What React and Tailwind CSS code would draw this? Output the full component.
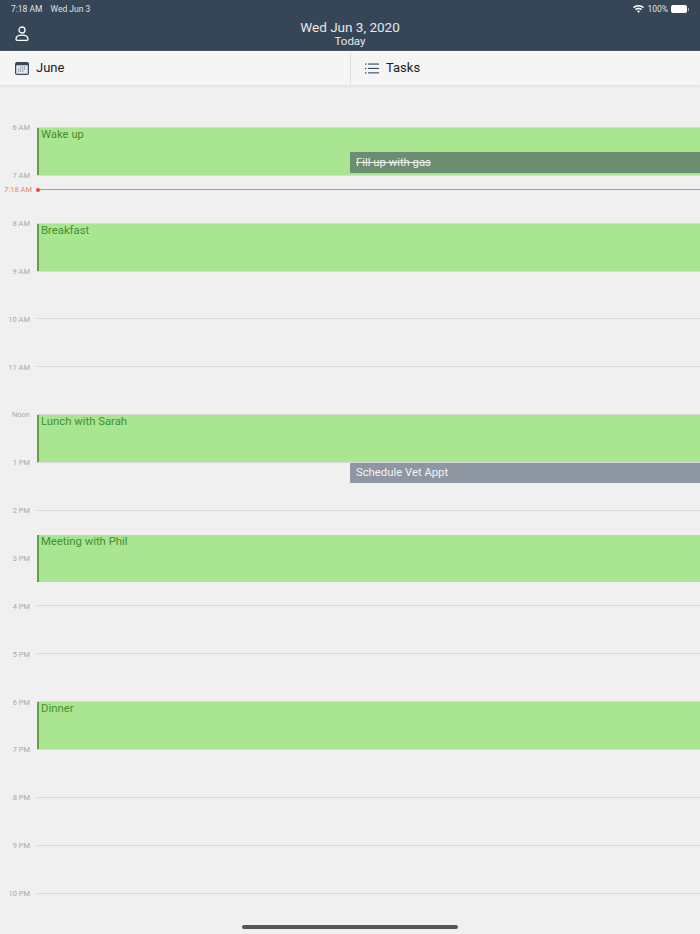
const HOUR = 47.85
const FIRST_LINE = 42

const horas = ['6 AM', '7 AM', '8 AM', '9 AM', '10 AM', '11 AM', 'Noon', '1 PM', '2 PM', '3 PM', '4 PM', '5 PM', '6 PM', '7 PM', '8 PM', '9 PM', '10 PM']

const eventos = [
  { nome: 'Wake up', inicio: 0, fim: 1 },
  { nome: 'Breakfast', inicio: 2, fim: 3 },
  { nome: 'Lunch with Sarah', inicio: 6, fim: 7 },
  { nome: 'Meeting with Phil', inicio: 8.5, fim: 9.5 },
  { nome: 'Dinner', inicio: 12, fim: 13 },
]

function posY(h) {
  return FIRST_LINE + h * HOUR
}

function IconeUsuario() {
  return (
    <svg width="14" height="15" viewBox="0 0 14 15" fill="none" stroke="#ffffff" strokeWidth="1.3">
      <circle cx="7" cy="4" r="3" />
      <path d="M1 13.2c0-2.6 2.2-4 6-4s6 1.400 6 4c0 .7-.4 1.100-1.100 1.100H2.100C1.400 14.300 1 13.900 1 13.200z" />
    </svg>
  )
}

function IconeCalendario() {
  return (
    <svg width="14" height="13" viewBox="0 0 14 13">
      <rect x="0" y="0" width="14" height="13" rx="2" fill="#34495e" />
      <rect x="1.200" y="3.200" width="11.600" height="8.600" rx="0.600" fill="#e6e9ec" />
      <g fill="#8c98a3">
        <rect x="5" y="4.500" width="1.300" height="1.200" />
        <rect x="7" y="4.500" width="1.300" height="1.200" />
        <rect x="9" y="4.500" width="1.300" height="1.200" />
        <rect x="3" y="6.500" width="1.300" height="1.200" />
        <rect x="5" y="6.500" width="1.300" height="1.200" />
        <rect x="7" y="6.500" width="1.300" height="1.200" />
        <rect x="9" y="6.500" width="1.300" height="1.200" />
        <rect x="3" y="8.500" width="1.300" height="1.200" />
        <rect x="5" y="8.500" width="1.300" height="1.200" />
        <rect x="7" y="8.500" width="1.300" height="1.200" />
      </g>
    </svg>
  )
}

function IconeLista() {
  return (
    <svg width="14" height="11" viewBox="0 0 14 11" fill="#34495e">
      <rect x="0" y="0.500" width="1.400" height="1.200" />
      <rect x="0" y="4.900" width="1.400" height="1.200" />
      <rect x="0" y="9.300" width="1.400" height="1.200" />
      <rect x="3" y="0.500" width="11" height="1.100" />
      <rect x="3" y="4.900" width="11" height="1.100" />
      <rect x="3" y="9.300" width="11" height="1.100" />
    </svg>
  )
}

function IconeWifi() {
  return (
    <svg width="11" height="8" viewBox="0 0 11 8" fill="#ffffff">
      <path d="M5.500 0C3.400 0 1.500.8 0 2.200l1 1.100C2.200 2.200 3.800 1.500 5.500 1.500s3.300.7 4.500 1.800l1-1.100C9.500.8 7.600 0 5.500 0z" />
      <path d="M5.500 2.800c-1.300 0-2.500.5-3.400 1.300l1 1.100c.6-.6 1.500-.9 2.400-.9s1.800.3 2.400.9l1-1.100c-.9-.8-2.100-1.300-3.400-1.300z" />
      <path d="M5.500 5.400c-.6 0-1.100.2-1.500.6L5.500 8 7 6c-.4-.4-.9-.6-1.500-.6z" />
    </svg>
  )
}

function Bateria() {
  return (
    <div className="flex items-center">
      <div className="h-[8px] w-[16px] rounded-[2px] border border-white/50 bg-white" />
      <div className="ml-[1px] h-[3px] w-[1px] bg-white/50" />
    </div>
  )
}

function Topo() {
  return (
    <header className="relative h-[51px] border-b border-[#4a5866] bg-[#374656]">
      <div className="flex h-[18px] items-center justify-between px-[11px] text-[8.500px] text-[#dfe2e5]">
        <div className="flex gap-[8px]">
          <span>7:18 AM</span>
          <span>Wed Jun 3</span>
        </div>
        <div className="flex items-center gap-[3px]">
          <IconeWifi />
          <span>100%</span>
          <Bateria />
        </div>
      </div>
      <div className="flex h-[32px] items-start">
        <div className="w-[15px]" />
        <div className="pt-[8px]">
          <IconeUsuario />
        </div>
        <div className="-ml-[29px] flex w-full flex-col items-center pt-[1px] text-[#e6e8eb]">
          <span className="text-[13.500px] leading-[16px]">Wed Jun 3, 2020</span>
          <span className="text-[11.500px] leading-[12px]">Today</span>
        </div>
      </div>
    </header>
  )
}

function BarraAbas() {
  return (
    <nav className="relative z-10 flex h-[34px] items-center bg-[#f5f5f5] text-[13px] text-[#1c1c1e] shadow-[0_1px_3px_rgba(0,0,0,0.10)]">
      <div className="flex h-full w-[350px] items-center gap-[7px] pl-[15px]">
        <IconeCalendario />
        <span>June</span>
      </div>
      <div className="h-[31px] w-px bg-[#dcdcdc]" />
      <div className="flex items-center gap-[7px] pl-[14px]">
        <IconeLista />
        <span>Tasks</span>
      </div>
    </nav>
  )
}

function LinhaHora({ hora }) {
  return (
    <div className="flex h-[47.850px] items-start">
      <div className="mt-[1px] flex h-0 w-[30px] items-center justify-end text-[7.500px] text-[#a9a9a9]">{hora}</div>
      <div className="ml-[7px] h-px flex-1 bg-[#d9d9d9]" />
    </div>
  )
}

function Evento({ nome, inicio, fim }) {
  return (
    <div
      className="absolute left-[37px] right-0 border-l-2 border-[#5fa14c] bg-[#aae591] pl-[2px] text-[11.300px] leading-[14px] text-[#43902f]"
      style={{ top: posY(inicio) + 1, height: (fim - inicio) * HOUR - 1 }}
    >
      {nome}
    </div>
  )
}

function Tarefa({ nome, topo, altura, feita }) {
  return (
    <div
      className={`absolute left-[350px] right-0 flex items-center rounded-l-[1px] pl-[6px] pt-[1px] text-[11.300px] text-[#f1f3f4] ${feita ? 'bg-[#6b8e6e] line-through' : 'bg-[#8e96a1]'}`}
      style={{ top: topo, height: altura }}
    >
      {nome}
    </div>
  )
}

function Agora() {
  return (
    <div className="absolute left-0 right-0 top-[104.500px] flex h-0 items-center">
      <span className="w-[32px] text-right text-[7.500px] text-[#ec7f74]">7:18 AM</span>
      <span className="ml-[4px] h-[4px] w-[4px] rounded-full bg-[#e9453a]" />
      <div className="h-px flex-1 bg-[#ea7f75]" />
    </div>
  )
}

export default function App() {
  return (
    <div className="relative h-[934px] w-[700px] overflow-hidden bg-[#f0f0f0]" style={{ fontFamily: 'Roboto, "Liberation Sans", sans-serif' }}>
      <Topo />
      <BarraAbas />
      <main className="relative pt-[42px]">
        {horas.map(h => <LinhaHora key={h} hora={h} />)}
        {eventos.map(ev => <Evento key={ev.nome} {...ev} />)}
        <Tarefa nome="Fill up with gas" topo={67} altura={21} feita />
        <Tarefa nome="Schedule Vet Appt" topo={378} altura={20} />
        <Agora />
      </main>
      <div className="absolute bottom-[5px] left-[242px] h-[4px] w-[216px] rounded-full bg-[#555555]" />
    </div>
  )
}
